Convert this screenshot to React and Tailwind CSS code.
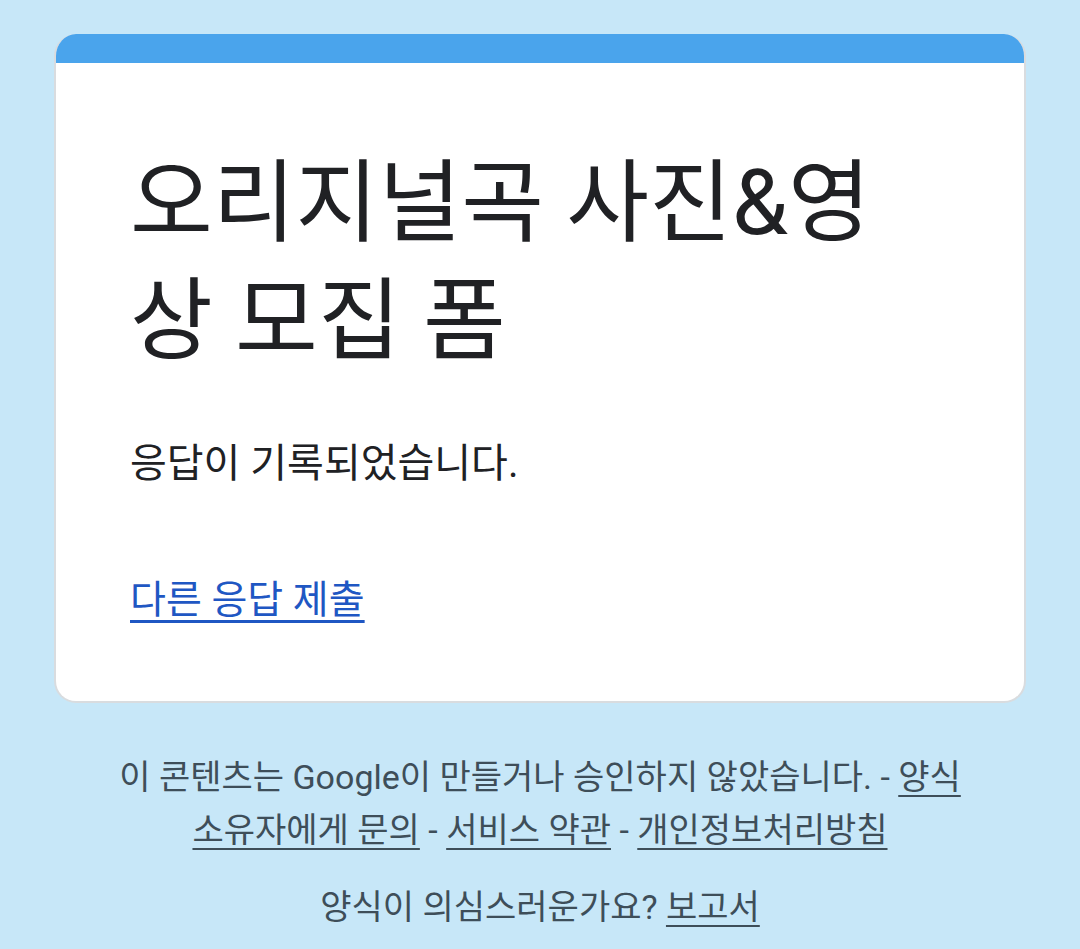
import React from 'react';

const font = { fontFamily: 'Roboto, "Noto Sans CJK KR", sans-serif' };

const FooterLink = ({ children }) => (
  <a href="#" className="underline underline-offset-[6px] decoration-2">
    {children}
  </a>
);

export default function App() {
  return (
    <div className="min-h-[949px] w-full bg-[#c7e7f8] pt-[34px]" style={font}>
      {/* Confirmation card */}
      <div className="mx-[54px] overflow-hidden rounded-[22px] bg-white border-x-2 border-b-2 border-[#d9dcdf]">
        <div className="h-[29px] bg-[#4aa4ec] -mx-[2px]" />
        <div className="px-[74px] pt-[82px] pb-[74px]">
          <h1 className="text-[90px] leading-[118px] text-[#202124]">
            오리지널곡 사진&amp;영상 모집 폼
          </h1>
          <p className="mt-[56px] text-[40px] leading-[54px] text-[#202124]">
            응답이 기록되었습니다.
          </p>
          <a
            href="#"
            className="mt-[82px] inline-block text-[39px] leading-[54px] text-[#1f57c3] underline decoration-[3px] underline-offset-[7px]"
          >
            다른 응답 제출
          </a>
        </div>
      </div>

      {/* Footer */}
      <div className="mx-auto mt-[48px] w-[900px] break-keep text-center text-[34px] leading-[53px] text-[#3e4e59]">
        <p>
          이 콘텐츠는 Google이 만들거나 승인하지 않았습니다. - <FooterLink>양식 소유자에게 문의</FooterLink> -{' '}
          <FooterLink>서비스 약관</FooterLink> - <FooterLink>개인정보처리방침</FooterLink>
        </p>
        <p className="mt-[24px]">
          양식이 의심스러운가요? <FooterLink>보고서</FooterLink>
        </p>
      </div>
    </div>
  );
}
